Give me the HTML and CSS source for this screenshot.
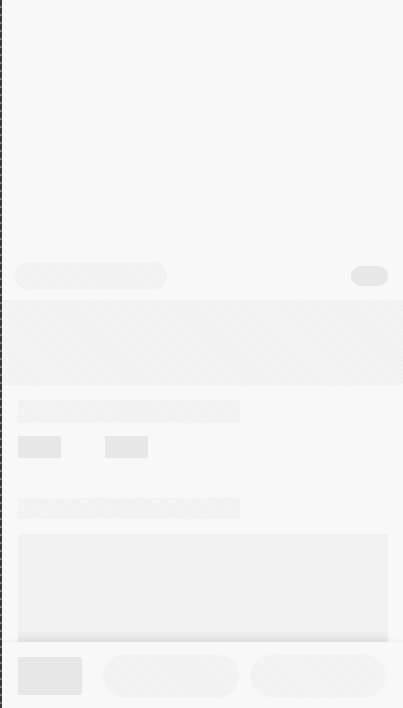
FILE: index.html
```html
<!DOCTYPE html>
<html>
<head>
	<title>加载中</title>
	<link rel="stylesheet" href="styles.css">
</head>
<body>
	<div class="page">
		<div class="cover"></div>
		<div class="toolbar">
			<div class="sk pill-title"></div>
			<div class="sk-solid pill-tag"></div>
		</div>
		<div class="sk band"></div>
		<div class="section">
			<div class="sk line"></div>
			<div class="chips">
				<div class="sk-solid chip"></div>
				<div class="sk-solid chip"></div>
			</div>
			<div class="sk line line-2"></div>
			<div class="sk card"></div>
		</div>
		<div class="footer">
			<div class="sk-solid btn-icon"></div>
			<div class="sk btn-pill"></div>
			<div class="sk btn-pill"></div>
		</div>
	</div>
</body>
</html>
```
FILE: styles.css
```css
	html,body{
		margin: 0;
		padding: 0;
		height: 100%;
	}
	body{
		background-color: #f8f8f8;
		font-family: "Liberation Sans", sans-serif;
	}
	.page{
		position: relative;
		height: 708px;
		padding-left: 2px;
		box-sizing: border-box;
		background-image: repeating-linear-gradient(to bottom, #3a3a3a 0, #3a3a3a 6px, #777 6px, #777 8px);
		background-size: 2px 100%;
		background-repeat: no-repeat;
		overflow: hidden;
	}
	.sk{
		background-color: #f1f1f1;
		background-image: repeating-linear-gradient(45deg, rgba(255,255,255,0.35) 0, rgba(255,255,255,0.35) 1px, transparent 1px, transparent 3px);
	}
	.sk-solid{
		background-color: #e7e7e7;
	}
	.cover{
		height: 263px;
	}
	.toolbar{
		display: flex;
		justify-content: space-between;
		align-items: center;
		height: 26px;
		padding: 0 15px 0 13px;
	}
	.pill-title{
		width: 152px;
		height: 26px;
		border-radius: 13px;
	}
	.pill-tag{
		width: 37px;
		height: 20px;
		border-radius: 10px;
	}
	.band{
		margin-top: 11px;
		margin-left: 1px;
		height: 85px;
	}
	.section{
		padding: 15px 15px 0 16px;
	}
	.line{
		width: 222px;
		height: 23px;
	}
	.line-2{
		margin-top: 40px;
		height: 21px;
	}
	.chips{
		display: flex;
		gap: 44px;
		margin-top: 13px;
	}
	.chip{
		width: 43px;
		height: 22px;
	}
	.card{
		margin-top: 15px;
		width: 370px;
		height: 108px;
		background-image: linear-gradient(to bottom, transparent 98px, #ededed 98px, #ededed 103px, #e6e6e6 103px);
	}
	.footer{
		position: relative;
		display: flex;
		align-items: center;
		height: 66px;
		padding: 2px 0 0 16px;
		box-sizing: border-box;
		box-shadow: 0 -2px 3px rgba(0,0,0,0.03);
	}
	.footer > div{
		flex-shrink: 0;
	}
	.btn-icon{
		width: 64px;
		height: 38px;
		margin-right: 21px;
	}
	.btn-pill{
		width: 136px;
		height: 42px;
		border-radius: 21px;
		margin-right: 11px;
	}
```
